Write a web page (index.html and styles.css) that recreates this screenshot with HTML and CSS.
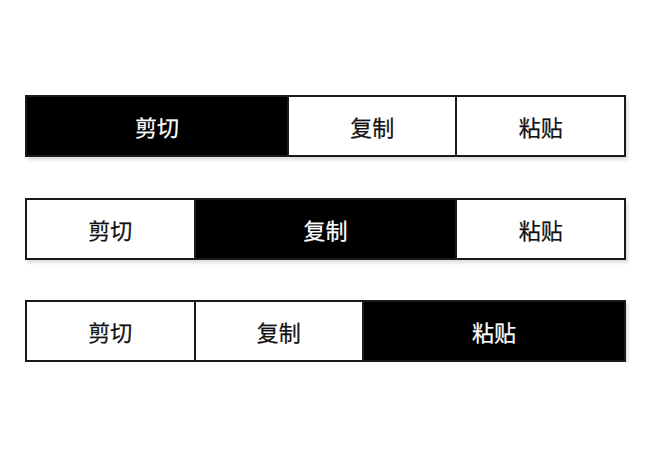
FILE: index.html
```html
<!DOCTYPE html>
<html lang="zh-CN">
<head>
<meta charset="utf-8">
<link rel="stylesheet" href="styles.css">
</head>
<body>
<div class="page">
  <div class="seg-bar">
    <div class="seg active">剪切</div>
    <div class="seg">复制</div>
    <div class="seg">粘贴</div>
  </div>
  <div class="seg-bar">
    <div class="seg">剪切</div>
    <div class="seg active">复制</div>
    <div class="seg">粘贴</div>
  </div>
  <div class="seg-bar">
    <div class="seg">剪切</div>
    <div class="seg">复制</div>
    <div class="seg active">粘贴</div>
  </div>
</div>
</body>
</html>
```
FILE: styles.css
```css
html, body {
  margin: 0;
  padding: 0;
  background: #fff;
}
.page {
  padding: 95px 0 0 25px;
  display: flex;
  flex-direction: column;
  gap: 40.5px;
  font-family: "Noto Sans CJK SC", "Noto Sans", sans-serif;
}
.seg-bar {
  box-sizing: border-box;
  width: 601px;
  height: 62px;
  display: flex;
  border: 2px solid #1a1a1a;
  box-shadow: 2px 3px 3px rgba(0, 0, 0, 0.13);
  background: #fff;
}
.seg {
  flex: 1 1 0;
  display: flex;
  align-items: center;
  justify-content: center;
  font-size: 22px;
  color: #111;
  background: #fff;
  -webkit-text-stroke: 0.25px currentColor;
}
.seg + .seg {
  border-left: 2px solid #1a1a1a;
}
.seg.active {
  flex-grow: 1.56;
  background: #000;
  color: #fff;
}
```
